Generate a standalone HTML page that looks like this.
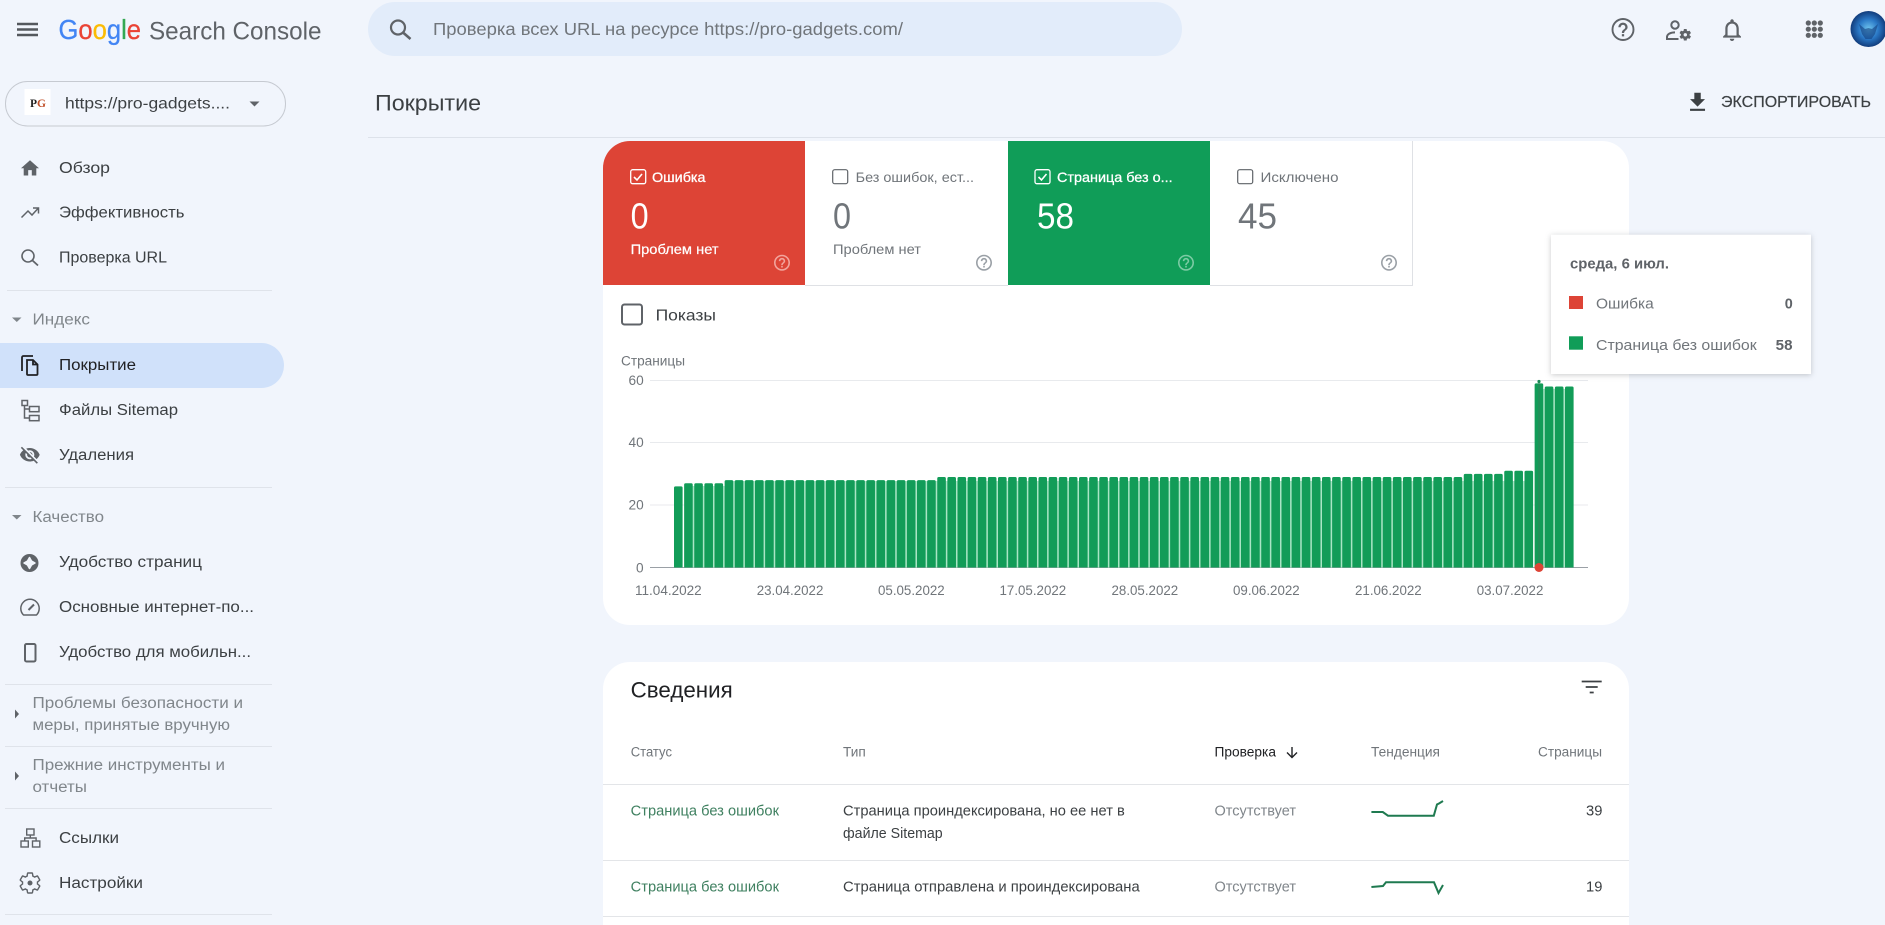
<!DOCTYPE html>
<html lang="ru"><head><meta charset="utf-8"><title>Покрытие - Google Search Console</title>
<style>
html,body{margin:0;padding:0;width:1885px;height:925px;overflow:hidden;background:#f1f5fc}
svg{display:block;position:absolute;left:0;top:0}
text{font-family:"Liberation Sans","Noto Sans CJK SC",sans-serif}
.n{font-size:15.5px;fill:#3c4043}
.s{font-size:15.5px;fill:#80868b}
.t{font-size:14px}
.g{fill:#5f6368}
.a{font-size:13.5px;fill:#70757a}
.h{font-size:13.5px;fill:#70757a}
.r{font-size:14.5px;fill:#3c4043}
.st{font-size:14.5px;fill:#3f8060}
.l{fill:none;stroke:#5f6368}
.w{fill:none;stroke:#fff}
</style></head><body>
<svg width="1885" height="925" viewBox="0 0 1885 925" xmlns="http://www.w3.org/2000/svg">
<defs>
<path id="help" d="M11 18h2v-2h-2v2zm1-16C6.48 2 2 6.48 2 12s4.48 10 10 10 10-4.48 10-10S17.52 2 12 2zm0 18c-4.41 0-8-3.59-8-8s3.59-8 8-8 8 3.59 8 8-3.59 8-8 8zm0-14c-2.21 0-4 1.79-4 4h2c0-1.1.9-2 2-2s2 .9 2 2c0 2-3 1.75-3 5h2c0-2.25 3-2.5 3-5 0-2.21-1.79-4-4-4z"/>
<path id="gear" d="M19.43 12.98c.04-.32.07-.64.07-.98s-.03-.66-.07-.98l2.11-1.65c.19-.15.24-.42.12-.64l-2-3.46c-.12-.22-.39-.3-.61-.22l-2.49 1c-.52-.4-1.08-.73-1.69-.98l-.38-2.65C14.46 2.18 14.25 2 14 2h-4c-.25 0-.46.18-.49.42l-.38 2.65c-.61.25-1.17.59-1.69.98l-2.49-1c-.23-.09-.49 0-.61.22l-2 3.46c-.13.22-.07.49.12.64l2.11 1.65c-.04.32-.07.65-.07.98s.03.66.07.98l-2.11 1.65c-.19.15-.24.42-.12.64l2 3.46c.12.22.39.3.61.22l2.49-1c.52.4 1.08.73 1.69.98l.38 2.65c.03.24.24.42.49.42h4c.25 0 .46-.18.49-.42l.38-2.65c.61-.25 1.17-.59 1.69-.98l2.49 1c.23.09.49 0 .61-.22l2-3.46c.12-.22.07-.49-.12-.64l-2.11-1.65z"/>
<radialGradient id="av" cx=".5" cy=".5" r=".55"><stop offset="0" stop-color="#6fc4ee"/><stop offset=".5" stop-color="#2a78c6"/><stop offset="1" stop-color="#0c2f6b"/></radialGradient>
<clipPath id="rc"><path d="M603 285V168a27 27 0 0 1 27-27H805V285z"/></clipPath>
</defs>

<!-- Header -->
<path d="M17 24h21M17 29.5h21M17 35h21" fill="none" stroke="#54585d" stroke-width="2.4"/>
<text x="58.5" y="39" font-size="28" stroke-width=".3" textLength="82.5" lengthAdjust="spacingAndGlyphs"><tspan fill="#4285f4" stroke="#4285f4">G</tspan><tspan fill="#ea4335" stroke="#ea4335">o</tspan><tspan fill="#fbbc05" stroke="#fbbc05">o</tspan><tspan fill="#4285f4" stroke="#4285f4">g</tspan><tspan fill="#34a853" stroke="#34a853">l</tspan><tspan fill="#ea4335" stroke="#ea4335">e</tspan></text>
<text x="149" y="39.5" font-size="25" fill="#5f6368" textLength="172.5" lengthAdjust="spacingAndGlyphs">Search Console</text>
<rect x="368" y="2" width="814" height="54" rx="27" fill="#e2ecfa"/>
<circle cx="398" cy="27.5" r="7" class="l" stroke-width="2.2"/><path d="M403 32.5l7.5 6.5" class="l" stroke-width="2.6"/>
<text x="433" y="35" font-size="17.5" fill="#70757a" textLength="470" lengthAdjust="spacingAndGlyphs">Проверка всех URL на ресурсе https://pro-gadgets.com/</text>

<circle cx="1623" cy="29.5" r="10.5" class="l" stroke-width="1.9"/>
<path transform="translate(1609.2 15.7) scale(1.15)" class="g" d="M11 18h2v-2h-2v2zm1-12c-2.21 0-4 1.79-4 4h2c0-1.1.9-2 2-2s2 .9 2 2c0 2-3 1.75-3 5h2c0-2.25 3-2.5 3-5 0-2.21-1.79-4-4-4z"/>
<circle cx="1675" cy="25" r="3.7" class="l" stroke-width="2"/>
<path d="M1678.5 39H1667v-1.8c0-3 3.5-4.8 8-4.8" class="l" stroke-width="2"/>
<use href="#gear" transform="translate(1678.3 27.8) scale(.58)" class="g"/><circle cx="1685.3" cy="34.8" r="1.7" fill="#f1f5fc"/>
<path transform="translate(1718.6 16.4) scale(1.12)" class="g" d="M12 22c1.1 0 2-.9 2-2h-4c0 1.1.9 2 2 2zm6-6v-5c0-3.07-1.63-5.64-4.5-6.32V4c0-.83-.67-1.5-1.5-1.5s-1.5.67-1.5 1.5v.68C7.64 5.36 6 7.92 6 11v5l-2 2v1h16v-1l-2-2zm-2 1H8v-6c0-2.48 1.51-4.5 4-4.5s4 2.02 4 4.5v6z"/>
<g class="g"><circle cx="1808.3" cy="23" r="2.6"/><circle cx="1814.3" cy="23" r="2.6"/><circle cx="1820.3" cy="23" r="2.6"/><circle cx="1808.3" cy="29.2" r="2.6"/><circle cx="1814.3" cy="29.2" r="2.6"/><circle cx="1820.3" cy="29.2" r="2.6"/><circle cx="1808.3" cy="35.3" r="2.6"/><circle cx="1814.3" cy="35.3" r="2.6"/><circle cx="1820.3" cy="35.3" r="2.6"/></g>
<circle cx="1868.5" cy="29" r="18" fill="url(#av)"/>
<path d="M1859 24l6 5 3.500-1 3.500 1 6-5-3 10-3.500 5h-6l-3.500-5z" fill="#123f7f" opacity=".6"/>

<!-- Property selector -->
<rect x="5.5" y="81.5" width="280" height="44.5" rx="22" fill="none" stroke="#c6cad1" stroke-width="1"/>
<rect x="24.5" y="89" width="26" height="26" fill="#fff"/>
<text x="30" y="107" font-size="11.500" font-weight="bold" style="font-family:'Liberation Serif',serif" fill="#222" textLength="16" lengthAdjust="spacingAndGlyphs">P<tspan fill="#c0502a">G</tspan></text>
<text x="65" y="108.7" font-size="16" fill="#3c4043" textLength="165" lengthAdjust="spacingAndGlyphs">https://pro-gadgets....</text>
<path d="M249.500 101.500h10l-5 5z" class="g"/>

<!-- Page title -->
<text x="375" y="110.7" font-size="22.5" fill="#3c4043" textLength="106" lengthAdjust="spacingAndGlyphs">Покрытие</text>
<rect x="368" y="137" width="1517" height="1" fill="#dde2ea"/>
<path transform="translate(1684.700 89.500) scale(1.07)" fill="#3c4043" d="M19 9h-4V3H9v6H5l7 7 7-7zM5 18v2h14v-2H5z"/>
<text x="1721" y="107" font-size="15.500" fill="#3c4043" stroke="#3c4043" stroke-width=".2" textLength="150" lengthAdjust="spacingAndGlyphs">ЭКСПОРТИРОВАТЬ</text>

<!-- Sidebar -->
<path d="M0 343H261.500a22.500 22.500 0 0 1 0 45H0z" fill="#d0e1fa"/>
<g fill="#dfe3ea">
<rect x="7" y="290" width="265" height="1"/><rect x="5" y="487" width="267" height="1"/><rect x="5" y="684" width="267" height="1"/><rect x="5" y="746" width="267" height="1"/><rect x="5" y="808" width="267" height="1"/><rect x="5" y="914" width="267" height="1"/>
</g>
<text class="n" x="59" y="173" textLength="51" lengthAdjust="spacingAndGlyphs">Обзор</text>
<text class="n" x="59" y="217.500" textLength="125.500" lengthAdjust="spacingAndGlyphs">Эффективность</text>
<text class="n" x="59" y="262.500" textLength="108" lengthAdjust="spacingAndGlyphs">Проверка URL</text>
<text class="s" x="32.500" y="324.500" textLength="57.500" lengthAdjust="spacingAndGlyphs">Индекс</text>
<text class="n" x="59" y="370" textLength="77" lengthAdjust="spacingAndGlyphs" style="fill:#202124">Покрытие</text>
<text class="n" x="59" y="415" textLength="119" lengthAdjust="spacingAndGlyphs">Файлы Sitemap</text>
<text class="n" x="59" y="460" textLength="75" lengthAdjust="spacingAndGlyphs">Удаления</text>
<text class="s" x="32.500" y="522" textLength="71.500" lengthAdjust="spacingAndGlyphs">Качество</text>
<text class="n" x="59" y="567" textLength="143" lengthAdjust="spacingAndGlyphs">Удобство страниц</text>
<text class="n" x="59" y="612" textLength="195" lengthAdjust="spacingAndGlyphs">Основные интернет-по...</text>
<text class="n" x="59" y="657" textLength="192" lengthAdjust="spacingAndGlyphs">Удобство для мобильн...</text>
<text class="s" x="32.500" y="708" textLength="210.500" lengthAdjust="spacingAndGlyphs">Проблемы безопасности и</text>
<text class="s" x="32.500" y="730" textLength="197.500" lengthAdjust="spacingAndGlyphs">меры, принятые вручную</text>
<text class="s" x="32.500" y="770" textLength="192.500" lengthAdjust="spacingAndGlyphs">Прежние инструменты и</text>
<text class="s" x="32.500" y="792" textLength="54.500" lengthAdjust="spacingAndGlyphs">отчеты</text>
<text class="n" x="59" y="843" textLength="60" lengthAdjust="spacingAndGlyphs">Ссылки</text>
<text class="n" x="59" y="888" textLength="84" lengthAdjust="spacingAndGlyphs">Настройки</text>

<!-- Sidebar icons -->
<path transform="translate(19.200 157.500) scale(.9)" class="g" d="M10 20v-6h4v6h5v-8h3L12 3 2 12h3v8z"/>
<path d="M21.500 217.500l6.500-6.500 4 4 6-6.500M33 208h5.500v5.500" class="l" stroke-width="1.500"/>
<circle cx="28" cy="256" r="6" class="l" stroke-width="1.600"/><path d="M32.500 260.500l5.500 5" class="l" stroke-width="1.800"/>
<path d="M12 317.500h9.500l-4.700 4.500z" fill="#80868b"/>
<g fill="none" stroke="#202124" stroke-width="1.800"><path d="M33 356H23.500a1.500 1.500 0 0 0-1.500 1.500V371"/><path d="M27 360h6l4.500 4.500V374a1 1 0 0 1-1 1H28a1 1 0 0 1-1-1z"/><path d="M33 360v4.500h4.500"/></g>
<g class="l" stroke-width="1.500"><rect x="22" y="400.500" width="5.500" height="5"/><rect x="29.500" y="406.500" width="9.500" height="5.200"/><rect x="29.500" y="415.500" width="9.500" height="5.200"/><path d="M24.500 405.500V418h5M24.500 409h5"/></g>
<path transform="translate(19 444) scale(.9)" class="g" d="M12 7c2.760 0 5 2.240 5 5 0 .650-.130 1.260-.360 1.830l2.920 2.920c1.510-1.260 2.700-2.890 3.430-4.750-1.730-4.390-6-7.500-11-7.500-1.400 0-2.740.250-3.980.700l2.160 2.160C10.740 7.130 11.350 7 12 7zM2 4.270l2.280 2.280.460.460C3.080 8.300 1.780 10.020 1 12c1.730 4.390 6 7.500 11 7.500 1.550 0 3.030-.300 4.380-.840l.420.420L19.730 22 21 20.730 3.270 3 2 4.270zM7.530 9.800l1.550 1.550c-.050.210-.080.430-.080.650 0 1.660 1.340 3 3 3 .220 0 .440-.030.650-.080l1.550 1.550c-.670.330-1.410.530-2.200.530-2.760 0-5-2.240-5-5 0-.790.200-1.530.530-2.200zm4.310-.780l3.150 3.150.020-.160c0-1.660-1.340-3-3-3l-.170.010z"/>
<path d="M12 515h9.500l-4.700 4.500z" fill="#80868b"/>
<circle cx="29.500" cy="563" r="9" class="g"/><path d="M29.500 557.500l2 3.500 3.500 2-3.500 2-2 3.500-2-3.500-3.500-2 3.500-2z" fill="#f1f5fc" stroke="#f1f5fc" stroke-width="1.500" stroke-linejoin="round"/>
<path d="M23.500 615h13a9.200 9.200 0 1 0-13 0z" class="l" stroke-width="1.500" stroke-linejoin="round"/><path d="M28.500 610l5.500-5.500" class="l" stroke-width="2"/>
<rect x="25" y="644" width="10.500" height="17.500" rx="1.500" class="l" stroke-width="2"/>
<path d="M15 709.500v9l4-4.500zM15 771.500v9l4-4.500z" class="g"/>
<g class="l" stroke-width="1.400"><rect x="26.700" y="829" width="7.300" height="6"/><rect x="21" y="841" width="7.300" height="6"/><rect x="32.500" y="841" width="7.300" height="6"/><path d="M30.300 835v3H24.700v3M30.300 838h5.800v3"/></g>
<use href="#gear" transform="translate(18 871)" class="l" stroke-width="1.400"/><circle cx="30" cy="883" r="2.500" class="g"/>

<!-- Chart card -->
<rect x="603" y="141" width="1026" height="484" rx="27" fill="#fff"/>
<rect x="603" y="141" width="805" height="144" fill="#dd4436" clip-path="url(#rc)"/>
<rect x="1008" y="141" width="202" height="144" fill="#109d58"/>
<path d="M805 285.500H1008M1210 285.500H1412.500V141" fill="none" stroke="#dfe1e5"/>

<!-- Tile 1 -->
<rect x="630.700" y="169.700" width="15" height="14" rx="2" class="w" stroke-width="1.300"/><path d="M634 177l3 3 5-6" class="w" stroke-width="1.600"/>
<text class="t" x="652" y="182" fill="#fff" stroke="#fff" stroke-width=".3" textLength="53.500" lengthAdjust="spacingAndGlyphs">Ошибка</text>
<text x="630.600" y="228.700" font-size="36" fill="#fff" textLength="18" lengthAdjust="spacingAndGlyphs">0</text>
<text class="t" x="630.600" y="254" fill="#fff" stroke="#fff" stroke-width=".2" textLength="88" lengthAdjust="spacingAndGlyphs">Проблем нет</text>
<use href="#help" transform="translate(772.400 253.100) scale(.8)" fill="#f2a49c"/>
<!-- Tile 2 -->
<rect x="832.700" y="169.700" width="15" height="14" rx="2" class="l" stroke-width="1.200"/>
<text class="t" x="855.600" y="182" fill="#70757a" textLength="118.400" lengthAdjust="spacingAndGlyphs">Без ошибок, ест...</text>
<text x="833" y="228.700" font-size="36" fill="#70757a" textLength="18" lengthAdjust="spacingAndGlyphs">0</text>
<text class="t" x="833" y="254" fill="#70757a" textLength="88" lengthAdjust="spacingAndGlyphs">Проблем нет</text>
<use href="#help" transform="translate(974.400 253.100) scale(.8)" fill="#9aa0a6"/>
<!-- Tile 3 -->
<rect x="1035" y="169.700" width="15" height="14" rx="2" class="w" stroke-width="1.300"/><path d="M1038.500 177l3 3 5-6" class="w" stroke-width="1.600"/>
<text class="t" x="1057" y="182" fill="#fff" stroke="#fff" stroke-width=".3" textLength="115.600" lengthAdjust="spacingAndGlyphs">Страница без о...</text>
<text x="1037" y="228.700" font-size="36" fill="#fff" textLength="37" lengthAdjust="spacingAndGlyphs">58</text>
<use href="#help" transform="translate(1176.400 253.100) scale(.8)" fill="#7ccba4"/>
<!-- Tile 4 -->
<rect x="1237.700" y="169.700" width="15" height="14" rx="2" class="l" stroke-width="1.200"/>
<text class="t" x="1260.500" y="182" fill="#70757a" textLength="78" lengthAdjust="spacingAndGlyphs">Исключено</text>
<text x="1238" y="228.700" font-size="36" fill="#70757a" textLength="39" lengthAdjust="spacingAndGlyphs">45</text>
<use href="#help" transform="translate(1379.400 253.100) scale(.8)" fill="#9aa0a6"/>

<!-- Показы -->
<rect x="622" y="304.500" width="20" height="20" rx="2.500" class="l" stroke-width="2"/>
<text x="655.600" y="320.500" font-size="16" fill="#3c4043" textLength="60.400" lengthAdjust="spacingAndGlyphs">Показы</text>

<!-- Chart axes -->
<text class="a" x="621" y="365.500" textLength="64" lengthAdjust="spacingAndGlyphs">Страницы</text>
<g fill="#e8eaed"><rect x="650" y="380" width="938" height="1"/><rect x="650" y="442" width="938" height="1"/><rect x="650" y="504.500" width="938" height="1"/></g>
<rect x="650" y="567" width="938" height="1" fill="#9aa0a6"/>
<text class="a" x="628.500" y="385" textLength="15.200" lengthAdjust="spacingAndGlyphs">60</text>
<text class="a" x="628.500" y="447" textLength="15.200" lengthAdjust="spacingAndGlyphs">40</text>
<text class="a" x="628.500" y="509.500" textLength="15.200" lengthAdjust="spacingAndGlyphs">20</text>
<text class="a" x="636" y="572.500" textLength="7.600" lengthAdjust="spacingAndGlyphs">0</text>

<!-- Bars -->
<rect x="685" y="486" width="45" height="81.500" fill="#a9e5c5"/><rect x="730" y="481" width="802" height="86.500" fill="#a9e5c5"/><rect x="1537" y="389" width="35" height="178.500" fill="#a9e5c5"/>
<path fill="#129c58" d="M674 567.500v-79.600q0-1.500 1.500-1.500h5.600q1.500 0 1.500 1.500v79.600z
m10.125 0v-82.700q0-1.500 1.500-1.500h5.600q1.500 0 1.500 1.500v82.700z
m10.125 0v-82.700q0-1.500 1.500-1.500h5.600q1.500 0 1.500 1.500v82.700z
m10.125 0v-82.700q0-1.500 1.500-1.500h5.600q1.500 0 1.500 1.500v82.700z
m10.125 0v-82.700q0-1.500 1.500-1.500h5.600q1.500 0 1.500 1.500v82.700z
m10.125 0v-85.900q0-1.500 1.500-1.500h5.600q1.500 0 1.500 1.500v85.900z
m10.125 0v-85.900q0-1.500 1.500-1.500h5.600q1.500 0 1.500 1.500v85.900z
m10.125 0v-85.900q0-1.500 1.500-1.500h5.600q1.500 0 1.500 1.500v85.900z
m10.125 0v-85.900q0-1.500 1.500-1.500h5.600q1.500 0 1.500 1.500v85.900z
m10.125 0v-85.900q0-1.500 1.500-1.500h5.600q1.500 0 1.500 1.500v85.900z
m10.125 0v-85.900q0-1.500 1.500-1.500h5.600q1.500 0 1.500 1.500v85.900z
m10.125 0v-85.900q0-1.500 1.500-1.500h5.600q1.500 0 1.500 1.500v85.900z
m10.125 0v-85.900q0-1.500 1.500-1.500h5.600q1.500 0 1.500 1.500v85.900z
m10.125 0v-85.900q0-1.500 1.500-1.500h5.600q1.500 0 1.500 1.500v85.900z
m10.125 0v-85.900q0-1.500 1.500-1.500h5.600q1.500 0 1.500 1.500v85.900z
m10.125 0v-85.900q0-1.500 1.500-1.500h5.600q1.500 0 1.500 1.500v85.900z
m10.125 0v-85.900q0-1.500 1.500-1.500h5.600q1.500 0 1.500 1.500v85.900z
m10.125 0v-85.900q0-1.500 1.500-1.500h5.600q1.500 0 1.500 1.500v85.900z
m10.125 0v-85.900q0-1.500 1.500-1.500h5.600q1.500 0 1.500 1.500v85.900z
m10.125 0v-85.900q0-1.500 1.500-1.500h5.600q1.500 0 1.500 1.500v85.900z
m10.125 0v-85.900q0-1.500 1.500-1.500h5.600q1.500 0 1.500 1.500v85.900z
m10.125 0v-85.900q0-1.500 1.500-1.500h5.600q1.500 0 1.500 1.500v85.900z
m10.125 0v-85.900q0-1.500 1.500-1.500h5.600q1.500 0 1.500 1.500v85.900z
m10.125 0v-85.900q0-1.500 1.500-1.500h5.600q1.500 0 1.500 1.500v85.900z
m10.125 0v-85.900q0-1.500 1.500-1.500h5.600q1.500 0 1.500 1.500v85.900z
m10.125 0v-85.900q0-1.500 1.500-1.500h5.600q1.500 0 1.500 1.500v85.900z
m10.125 0v-89q0-1.500 1.500-1.500h5.600q1.500 0 1.500 1.500v89z
m10.125 0v-89q0-1.500 1.500-1.500h5.600q1.500 0 1.500 1.500v89z
m10.125 0v-89q0-1.500 1.500-1.500h5.600q1.500 0 1.500 1.500v89z
m10.125 0v-89q0-1.500 1.500-1.500h5.600q1.500 0 1.500 1.500v89z
m10.125 0v-89q0-1.500 1.500-1.500h5.600q1.500 0 1.500 1.500v89z
m10.125 0v-89q0-1.500 1.500-1.500h5.600q1.500 0 1.500 1.500v89z
m10.125 0v-89q0-1.500 1.500-1.500h5.600q1.500 0 1.500 1.500v89z
m10.125 0v-89q0-1.500 1.500-1.500h5.600q1.500 0 1.500 1.500v89z
m10.125 0v-89q0-1.500 1.500-1.500h5.600q1.500 0 1.500 1.500v89z
m10.125 0v-89q0-1.500 1.500-1.500h5.600q1.500 0 1.500 1.500v89z
m10.125 0v-89q0-1.500 1.500-1.500h5.600q1.500 0 1.500 1.500v89z
m10.125 0v-89q0-1.500 1.500-1.500h5.600q1.500 0 1.500 1.500v89z
m10.125 0v-89q0-1.500 1.500-1.500h5.600q1.500 0 1.500 1.500v89z
m10.125 0v-89q0-1.500 1.500-1.500h5.600q1.500 0 1.500 1.500v89z
m10.125 0v-89q0-1.500 1.500-1.500h5.600q1.500 0 1.500 1.500v89z
m10.125 0v-89q0-1.500 1.500-1.500h5.600q1.500 0 1.500 1.500v89z
m10.125 0v-89q0-1.500 1.500-1.500h5.600q1.500 0 1.500 1.500v89z
m10.125 0v-89q0-1.500 1.500-1.500h5.600q1.500 0 1.500 1.500v89z
m10.125 0v-89q0-1.500 1.500-1.500h5.600q1.500 0 1.500 1.500v89z
m10.125 0v-89q0-1.500 1.500-1.500h5.600q1.500 0 1.500 1.500v89z
m10.125 0v-89q0-1.500 1.500-1.500h5.600q1.500 0 1.500 1.500v89z
m10.125 0v-89q0-1.500 1.500-1.500h5.600q1.500 0 1.500 1.500v89z
m10.125 0v-89q0-1.500 1.500-1.500h5.600q1.500 0 1.500 1.500v89z
m10.125 0v-89q0-1.500 1.500-1.500h5.600q1.500 0 1.500 1.500v89z
m10.125 0v-89q0-1.500 1.500-1.500h5.600q1.500 0 1.500 1.500v89z
m10.125 0v-89q0-1.500 1.500-1.500h5.600q1.500 0 1.500 1.500v89z
m10.125 0v-89q0-1.500 1.500-1.500h5.600q1.500 0 1.500 1.500v89z
m10.125 0v-89q0-1.500 1.500-1.500h5.600q1.500 0 1.500 1.500v89z
m10.125 0v-89q0-1.500 1.500-1.500h5.600q1.500 0 1.500 1.500v89z
m10.125 0v-89q0-1.500 1.500-1.500h5.600q1.500 0 1.500 1.500v89z
m10.125 0v-89q0-1.500 1.500-1.500h5.600q1.500 0 1.500 1.500v89z
m10.125 0v-89q0-1.500 1.500-1.500h5.600q1.500 0 1.500 1.500v89z
m10.125 0v-89q0-1.500 1.500-1.500h5.600q1.500 0 1.500 1.500v89z
m10.125 0v-89q0-1.500 1.500-1.500h5.600q1.500 0 1.500 1.500v89z
m10.125 0v-89q0-1.500 1.500-1.500h5.600q1.500 0 1.500 1.500v89z
m10.125 0v-89q0-1.500 1.500-1.500h5.600q1.500 0 1.500 1.500v89z
m10.125 0v-89q0-1.500 1.500-1.500h5.600q1.500 0 1.500 1.500v89z
m10.125 0v-89q0-1.500 1.500-1.500h5.600q1.500 0 1.500 1.500v89z
m10.125 0v-89q0-1.500 1.500-1.500h5.600q1.500 0 1.500 1.500v89z
m10.125 0v-89q0-1.500 1.500-1.500h5.600q1.500 0 1.500 1.500v89z
m10.125 0v-89q0-1.500 1.500-1.500h5.600q1.500 0 1.500 1.500v89z
m10.125 0v-89q0-1.500 1.500-1.500h5.600q1.500 0 1.500 1.500v89z
m10.125 0v-89q0-1.500 1.500-1.500h5.600q1.500 0 1.500 1.500v89z
m10.125 0v-89q0-1.500 1.500-1.500h5.600q1.500 0 1.500 1.500v89z
m10.125 0v-89q0-1.500 1.500-1.500h5.600q1.500 0 1.500 1.500v89z
m10.125 0v-89q0-1.500 1.500-1.500h5.600q1.500 0 1.500 1.500v89z
m10.125 0v-89q0-1.500 1.500-1.500h5.600q1.500 0 1.500 1.500v89z
m10.125 0v-89q0-1.500 1.500-1.500h5.600q1.500 0 1.500 1.500v89z
m10.125 0v-89q0-1.500 1.500-1.500h5.600q1.500 0 1.500 1.500v89z
m10.125 0v-89q0-1.500 1.500-1.500h5.600q1.500 0 1.500 1.500v89z
m10.125 0v-89q0-1.500 1.500-1.500h5.600q1.500 0 1.500 1.500v89z
m10.125 0v-89q0-1.500 1.500-1.500h5.600q1.500 0 1.500 1.500v89z
m10.125 0v-92.100q0-1.500 1.500-1.500h5.600q1.500 0 1.500 1.500v92.100z
m10.125 0v-92.100q0-1.500 1.500-1.500h5.600q1.500 0 1.500 1.500v92.100z
m10.125 0v-92.100q0-1.500 1.500-1.500h5.600q1.500 0 1.500 1.500v92.100z
m10.125 0v-92.100q0-1.500 1.500-1.500h5.600q1.500 0 1.500 1.500v92.100z
m10.125 0v-95.200q0-1.500 1.500-1.500h5.600q1.500 0 1.500 1.500v95.200z
m10.125 0v-95.200q0-1.500 1.500-1.500h5.600q1.500 0 1.500 1.500v95.200z
m10.125 0v-95.200q0-1.500 1.500-1.500h5.600q1.500 0 1.500 1.500v95.200z
m10.125 0v-182.600q0-1.500 1.500-1.500h5.600q1.500 0 1.500 1.500v182.600z
m10.125 0v-179.500q0-1.500 1.500-1.500h5.600q1.500 0 1.500 1.500v179.500z
m10.125 0v-179.500q0-1.500 1.500-1.500h5.600q1.500 0 1.500 1.500v179.500z
m10.125 0v-179.500q0-1.500 1.500-1.500h5.600q1.500 0 1.500 1.500v179.500z"/>
<path d="M1539 381V567" stroke="#3d7a5c" stroke-width="1" opacity=".7"/>
<circle cx="1539" cy="381.500" r="1.600" fill="#1a8a55"/>
<circle cx="1539" cy="567.500" r="4.500" fill="#dd4436"/>

<text class="a" x="635" y="595" textLength="66.700" lengthAdjust="spacingAndGlyphs">11.04.2022</text>
<text class="a" x="756.700" y="595" textLength="66.700" lengthAdjust="spacingAndGlyphs">23.04.2022</text>
<text class="a" x="878" y="595" textLength="66.700" lengthAdjust="spacingAndGlyphs">05.05.2022</text>
<text class="a" x="999.500" y="595" textLength="66.700" lengthAdjust="spacingAndGlyphs">17.05.2022</text>
<text class="a" x="1111.500" y="595" textLength="66.700" lengthAdjust="spacingAndGlyphs">28.05.2022</text>
<text class="a" x="1233" y="595" textLength="66.700" lengthAdjust="spacingAndGlyphs">09.06.2022</text>
<text class="a" x="1355" y="595" textLength="66.700" lengthAdjust="spacingAndGlyphs">21.06.2022</text>
<text class="a" x="1476.700" y="595" textLength="66.700" lengthAdjust="spacingAndGlyphs">03.07.2022</text>

<!-- Tooltip -->
<rect x="1551" y="234.700" width="260" height="139.300" fill="#fff" style="filter:drop-shadow(0 1px 3px rgba(60,64,67,.28))"/>
<text x="1570" y="268.500" font-size="14.500" font-weight="bold" fill="#5f6368" textLength="99" lengthAdjust="spacingAndGlyphs">среда, 6 июл.</text>
<rect x="1569" y="296" width="14" height="13" fill="#dd4436"/>
<text x="1596" y="308.700" font-size="15" fill="#70757a" textLength="57.700" lengthAdjust="spacingAndGlyphs">Ошибка</text>
<text x="1784.700" y="308.700" font-size="15" fill="#5f6368" font-weight="bold" textLength="8" lengthAdjust="spacingAndGlyphs">0</text>
<rect x="1569" y="336.300" width="14" height="13.400" fill="#109d58"/>
<text x="1596" y="350" font-size="15" fill="#70757a" textLength="160.700" lengthAdjust="spacingAndGlyphs">Страница без ошибок</text>
<text x="1775.700" y="350" font-size="15" fill="#5f6368" font-weight="bold" textLength="16.800" lengthAdjust="spacingAndGlyphs">58</text>

<!-- Details card -->
<path d="M603 925V689a27 27 0 0 1 27-27H1602a27 27 0 0 1 27 27V925z" fill="#fff"/>
<text x="630.700" y="697.700" font-size="22" fill="#202124" textLength="102" lengthAdjust="spacingAndGlyphs">Сведения</text>
<path d="M1581.700 681.500h20M1585.700 687h12M1589.700 692.500h4" fill="none" stroke="#3c4043" stroke-width="1.800"/>
<text class="h" x="630.700" y="756.700" textLength="41.300" lengthAdjust="spacingAndGlyphs">Статус</text>
<text class="h" x="843" y="756.700" textLength="22.700" lengthAdjust="spacingAndGlyphs">Тип</text>
<text class="h" x="1214.500" y="756.700" textLength="61.500" lengthAdjust="spacingAndGlyphs" style="fill:#202124">Проверка</text>
<path d="M1292 747v10.500M1287 752.500l5 5 5-5" fill="none" stroke="#202124" stroke-width="1.400"/>
<text class="h" x="1371" y="756.700" textLength="69" lengthAdjust="spacingAndGlyphs">Тенденция</text>
<text class="h" x="1538" y="756.700" textLength="64" lengthAdjust="spacingAndGlyphs">Страницы</text>
<g fill="#e3e5e8"><rect x="603" y="784" width="1026" height="1"/><rect x="603" y="860" width="1026" height="1"/><rect x="603" y="916" width="1026" height="1"/></g>

<text class="st" x="630.700" y="815.700" textLength="148.300" lengthAdjust="spacingAndGlyphs">Страница без ошибок</text>
<text class="r" x="843" y="815.700" textLength="281.800" lengthAdjust="spacingAndGlyphs">Страница проиндексирована, но ее нет в</text>
<text class="r" x="843" y="838" textLength="99.700" lengthAdjust="spacingAndGlyphs">файле Sitemap</text>
<text class="r" x="1214.500" y="815.700" textLength="81.500" lengthAdjust="spacingAndGlyphs" style="fill:#80868b">Отсутствует</text>
<path d="M1371.400 812H1382.800L1388 815.700H1433.800L1437 804.500L1439 803.500L1443 801" fill="none" stroke="#1f7a50" stroke-width="2"/>
<text class="r" x="1586" y="815.700" textLength="16.400" lengthAdjust="spacingAndGlyphs">39</text>

<text class="st" x="630.700" y="891.700" textLength="148.300" lengthAdjust="spacingAndGlyphs">Страница без ошибок</text>
<text class="r" x="843" y="891.700" textLength="296.700" lengthAdjust="spacingAndGlyphs">Страница отправлена и проиндексирована</text>
<text class="r" x="1214.500" y="891.700" textLength="81.500" lengthAdjust="spacingAndGlyphs" style="fill:#80868b">Отсутствует</text>
<path d="M1371.400 887L1383 886L1386 882.300H1434L1438.500 893L1443 885" fill="none" stroke="#1f7a50" stroke-width="2"/>
<text class="r" x="1586" y="891.700" textLength="16.400" lengthAdjust="spacingAndGlyphs">19</text>
</svg>
</body></html>
